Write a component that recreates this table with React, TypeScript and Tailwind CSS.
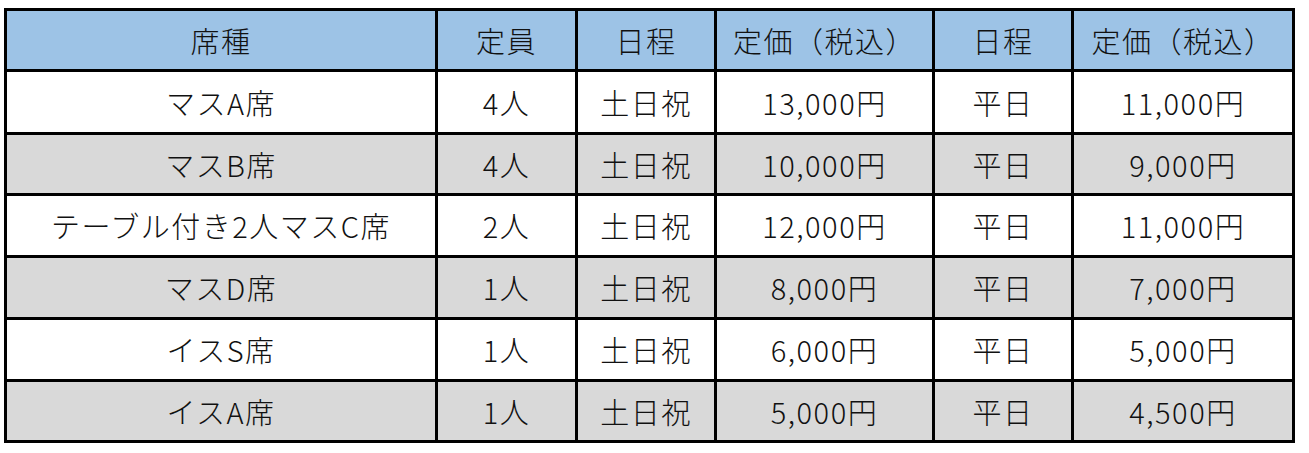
import React from "react";

const header = ["席種", "定員", "日程", "定価（税込）", "日程", "定価（税込）"];
const rows: string[][] = [
  ["マスA席", "4人", "土日祝", "13,000円", "平日", "11,000円"],
  ["マスB席", "4人", "土日祝", "10,000円", "平日", "9,000円"],
  ["テーブル付き2人マスC席", "2人", "土日祝", "12,000円", "平日", "11,000円"],
  ["マスD席", "1人", "土日祝", "8,000円", "平日", "7,000円"],
  ["イスS席", "1人", "土日祝", "6,000円", "平日", "5,000円"],
  ["イスA席", "1人", "土日祝", "5,000円", "平日", "4,500円"],
];

export default function App() {
  return (
    <div
      className="w-[1309px] h-[453px] bg-white pl-[4px] pt-[8px]"
      style={{ fontFamily: '"Noto Sans CJK JP", "Noto Sans", sans-serif' }}
    >
      <div className="inline-grid bg-black p-[3px] gap-[3px] grid-cols-[428px_137px_136px_215px_136px_218px] grid-rows-[58px_60px_58px_59px_59px_59px_58px] text-[29px] font-light tracking-[1.5px] leading-none text-[#111]">
        {header.map((h, i) => (
          <div key={"h" + i} className="bg-[#9dc3e6] flex items-center justify-center">
            {h}
          </div>
        ))}
        {rows.map((r, ri) =>
          r.map((c, ci) => (
            <div
              key={ri + "-" + ci}
              className={
                (ri % 2 === 1 ? "bg-[#d9d9d9]" : "bg-white") +
                " flex items-center justify-center"
              }
            >
              {c}
            </div>
          ))
        )}
      </div>
    </div>
  );
}
